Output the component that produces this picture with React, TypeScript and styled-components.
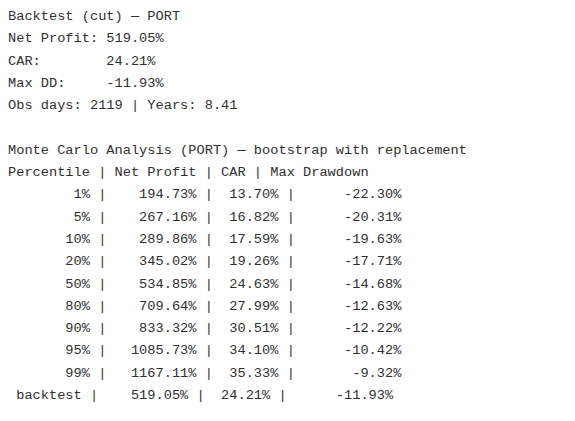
import React from "react";
import styled, { createGlobalStyle } from "styled-components";

const GlobalStyle = createGlobalStyle`
  html, body {
    margin: 0;
    padding: 0;
    background: #ffffff;
  }
`;

const Output = styled.div`
  display: flex;
  flex-direction: column;
  padding: 6px 8px;
  font-family: "Liberation Mono", "DejaVu Sans Mono", monospace;
  font-size: 13.67px;
  line-height: 22.3px;
  color: #2f2f2f;
`;

const Block = styled.div`
  display: flex;
  flex-direction: column;
  margin-bottom: ${(p: { gap?: number }) => p.gap ?? 0}px;
`;

const Line = styled.div`
  white-space: pre;
`;

const summary = [
  "Backtest (cut) — PORT",
  "Net Profit: 519.05%",
  "CAR:        24.21%",
  "Max DD:     -11.93%",
  "Obs days: 2119 | Years: 8.41",
];

const rows = [
  ["1%", "194.73%", "13.70%", "-22.30%"],
  ["5%", "267.16%", "16.82%", "-20.31%"],
  ["10%", "289.86%", "17.59%", "-19.63%"],
  ["20%", "345.02%", "19.26%", "-17.71%"],
  ["50%", "534.85%", "24.63%", "-14.68%"],
  ["80%", "709.64%", "27.99%", "-12.63%"],
  ["90%", "833.32%", "30.51%", "-12.22%"],
  ["95%", "1085.73%", "34.10%", "-10.42%"],
  ["99%", "1167.11%", "35.33%", "-9.32%"],
];

const fmt = (label: string, np: string, car: string, dd: string, w = 10) =>
  `${label.padStart(w)} | ${np.padStart(10)} | ${car.padStart(7)} | ${dd.padStart(12)}`;

const App = () => {
  return (
    <>
      <GlobalStyle />
      <Output>
        <Block gap={22.3}>
          {summary.map((s) => (
            <Line key={s}>{s}</Line>
          ))}
        </Block>
        <Block>
          <Line>Monte Carlo Analysis (PORT) — bootstrap with replacement</Line>
          <Line>Percentile | Net Profit | CAR | Max Drawdown</Line>
          {rows.map((r) => (
            <Line key={r[0]}>{fmt(r[0], r[1], r[2], r[3])}</Line>
          ))}
          <Line>{fmt("backtest", "519.05%", "24.21%", "-11.93%", 9)}</Line>
        </Block>
      </Output>
    </>
  );
};

export default App;
